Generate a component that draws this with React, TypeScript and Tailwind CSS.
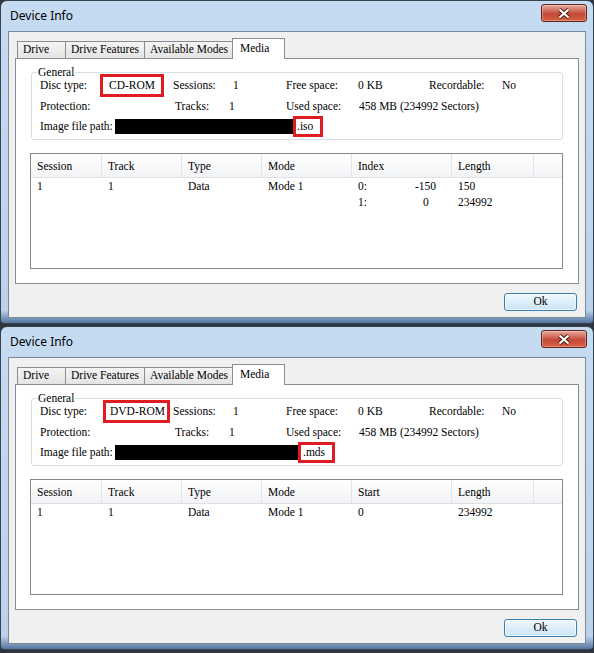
import type { ReactNode } from "react";

type IndexCell = { label: string; labelW: string; value: string };

type TrackRow = {
  session: string;
  track: string;
  type: string;
  mode: string;
  fifth: ReactNode;
  length: string;
};

type DeviceInfo = {
  disc: string;
  discLabelW: string;
  discBox: string;
  ext: string;
  pathBarW: string;
  extBox: string;
  fifthHeader: string;
  rows: TrackRow[];
};

const serif = "font-['Liberation_Serif',serif] text-[11.5px] text-black";

function IndexValue({ label, labelW, value }: IndexCell) {
  return (
    <span className="flex">
      <span className={labelW}>{label}</span>
      <span>{value}</span>
    </span>
  );
}

const devices: DeviceInfo[] = [
  {
    disc: "CD-ROM",
    discLabelW: "w-[60px]",
    discBox: "w-[64px] mr-[9px] pl-[6px]",
    ext: ".iso",
    pathBarW: "w-[178px]",
    extBox: "w-[30px] pl-[1px]",
    fifthHeader: "Index",
    rows: [
      {
        session: "1",
        track: "1",
        type: "Data",
        mode: "Mode 1",
        fifth: <IndexValue label="0:" labelW="w-[57px]" value="-150" />,
        length: "150",
      },
      {
        session: "",
        track: "",
        type: "",
        mode: "",
        fifth: <IndexValue label="1:" labelW="w-[65px]" value="0" />,
        length: "234992",
      },
    ],
  },
  {
    disc: "DVD-ROM",
    discLabelW: "w-[63px]",
    discBox: "w-[67px] mr-[3px] pl-[4px]",
    ext: ".mds",
    pathBarW: "w-[183px]",
    extBox: "w-[37px] pl-[2px]",
    fifthHeader: "Start",
    rows: [
      { session: "1", track: "1", type: "Data", mode: "Mode 1", fifth: "0", length: "234992" },
    ],
  },
];

const cols = "grid grid-cols-[71px_80px_80px_90px_100px_82px_1fr]";

function CloseButton() {
  return (
    <div className="mr-[6px] mt-[3px] flex h-[18px] w-[46px] items-center justify-center rounded-[3px] border border-[#5e2420] bg-linear-to-b from-[#e9a99b] via-[#c24a3a] via-55% to-[#d9603f] shadow-[inset_0_0_0_1px_rgba(255,255,255,0.3)]">
      <svg width="14" height="11" viewBox="0 0 14 11">
        <path d="M2.5 1.5 L11.5 9.5 M11.5 1.5 L2.5 9.5" stroke="#4a1512" strokeWidth="4" />
        <path d="M2.5 1.5 L11.5 9.5 M11.5 1.5 L2.5 9.5" stroke="#ffffff" strokeWidth="2.2" />
      </svg>
    </div>
  );
}

function Tabs() {
  const tab =
    "-ml-px flex h-[17px] items-center border-l border-t border-r border-[#898c95] bg-linear-to-b from-[#f4f4f4] to-[#e4e4e4] pl-[5px]";
  return (
    <div className="flex h-[20px] items-end pl-[3px]">
      <div className={`${tab} w-[49px]`}>Drive</div>
      <div className={`${tab} w-[80px]`}>Drive Features</div>
      <div className={`${tab} w-[89px]`}>Available Modes</div>
      <div className="relative z-10 -mb-px -ml-px h-[21px] w-[53px] border-l border-t border-r border-[#898c95] bg-white pl-[7px] pt-[2px] leading-[15px]">
        Media
      </div>
    </div>
  );
}

function GeneralGroup({ d }: { d: DeviceInfo }) {
  return (
    <fieldset className="mx-[15px] mt-[6px] rounded-[3px] border border-[#d5dde5] p-0 pb-[2px]">
      <legend className="ml-[5px] px-[1px] leading-[14px]">General</legend>
      <div className="-mt-[5px] flex flex-col pl-[8px]">
        <div className="flex h-[23px] items-center">
          <span className={d.discLabelW}>Disc type:</span>
          <span className={`flex h-[23px] items-center border-[3px] border-[#e01b22] ${d.discBox}`}>{d.disc}</span>
          <span className="w-[60px]">Sessions:</span>
          <span className="w-[53px]">1</span>
          <span className="w-[72px]">Free space:</span>
          <span className="w-[71px]">0 KB</span>
          <span className="w-[73px]">Recordable:</span>
          <span>No</span>
        </div>
        <div className="flex h-[19px] items-center">
          <span className="w-[135px]">Protection:</span>
          <span className="w-[54px]">Tracks:</span>
          <span className="w-[57px]">1</span>
          <span className="w-[73px]">Used space:</span>
          <span>458 MB (234992 Sectors)</span>
        </div>
        <div className="flex h-[21px] items-center">
          <span className="w-[75px]">Image file path:</span>
          <span className={`h-[15px] bg-black ${d.pathBarW}`} />
          <span className={`flex h-[21px] items-center border-[3px] border-[#e01b22] ${d.extBox}`}>{d.ext}</span>
        </div>
      </div>
    </fieldset>
  );
}

function TrackList({ d }: { d: DeviceInfo }) {
  const headers = ["Session", "Track", "Type", "Mode", d.fifthHeader, "Length"];
  return (
    <div className="ml-[14px] mr-[15px] mt-[13px] h-[116px] border border-[#828790] bg-white">
      <div className={`${cols} h-[24px] border-b border-[#dfe1e6] bg-linear-to-b from-white to-[#f2f3f5]`}>
        {headers.map((h) => (
          <div key={h} className="flex items-center border-r border-[#e2e4e9] pl-[6px] pt-[2px]">
            {h}
          </div>
        ))}
        <div />
      </div>
      {d.rows.map((r, i) => (
        <div key={i} className={`${cols} h-[16px] leading-[16px]`}>
          <div className="pl-[6px]">{r.session}</div>
          <div className="pl-[6px]">{r.track}</div>
          <div className="pl-[6px]">{r.type}</div>
          <div className="pl-[6px]">{r.mode}</div>
          <div className="pl-[6px]">{r.fifth}</div>
          <div className="pl-[6px]">{r.length}</div>
          <div />
        </div>
      ))}
    </div>
  );
}

function DeviceInfoWindow({ d }: { d: DeviceInfo }) {
  return (
    <div className="flex h-[324px] flex-col rounded-t-[7px] rounded-b-[4px] border border-[#384350] bg-linear-to-b from-[#c5dbf2] via-[#bcd2ea] via-96% to-[#54769f]">
      {/* title bar */}
      <div className="flex h-[30px] items-start justify-between">
        <span className="self-center pl-[9px] font-['Noto_Sans',sans-serif] text-[12px] text-black">Device Info</span>
        <CloseButton />
      </div>

      {/* dialog body */}
      <div className={`mx-[7px] flex h-[287px] flex-col border border-[#7b8896] bg-[#f0f0f0] px-[6px] pt-[6px] ${serif}`}>
        <Tabs />
        <div className="flex h-[226px] flex-col border border-[#898c95] bg-white">
          <GeneralGroup d={d} />
          <TrackList d={d} />
        </div>
        <div className="flex justify-end pr-[2px] pt-[9px]">
          <button className="flex h-[18px] w-[73px] items-center justify-center rounded-[3px] border border-[#3c7fb1] bg-linear-to-b from-[#f1f8fd] to-[#cae4f6] shadow-[inset_0_0_0_1px_rgba(255,255,255,0.6)]">
            Ok
          </button>
        </div>
      </div>
    </div>
  );
}

export default function App() {
  return (
    <div className="flex h-[653px] w-[594px] flex-col gap-[2px] bg-[#2f353e]">
      {devices.map((d) => (
        <DeviceInfoWindow key={d.disc} d={d} />
      ))}
    </div>
  );
}
